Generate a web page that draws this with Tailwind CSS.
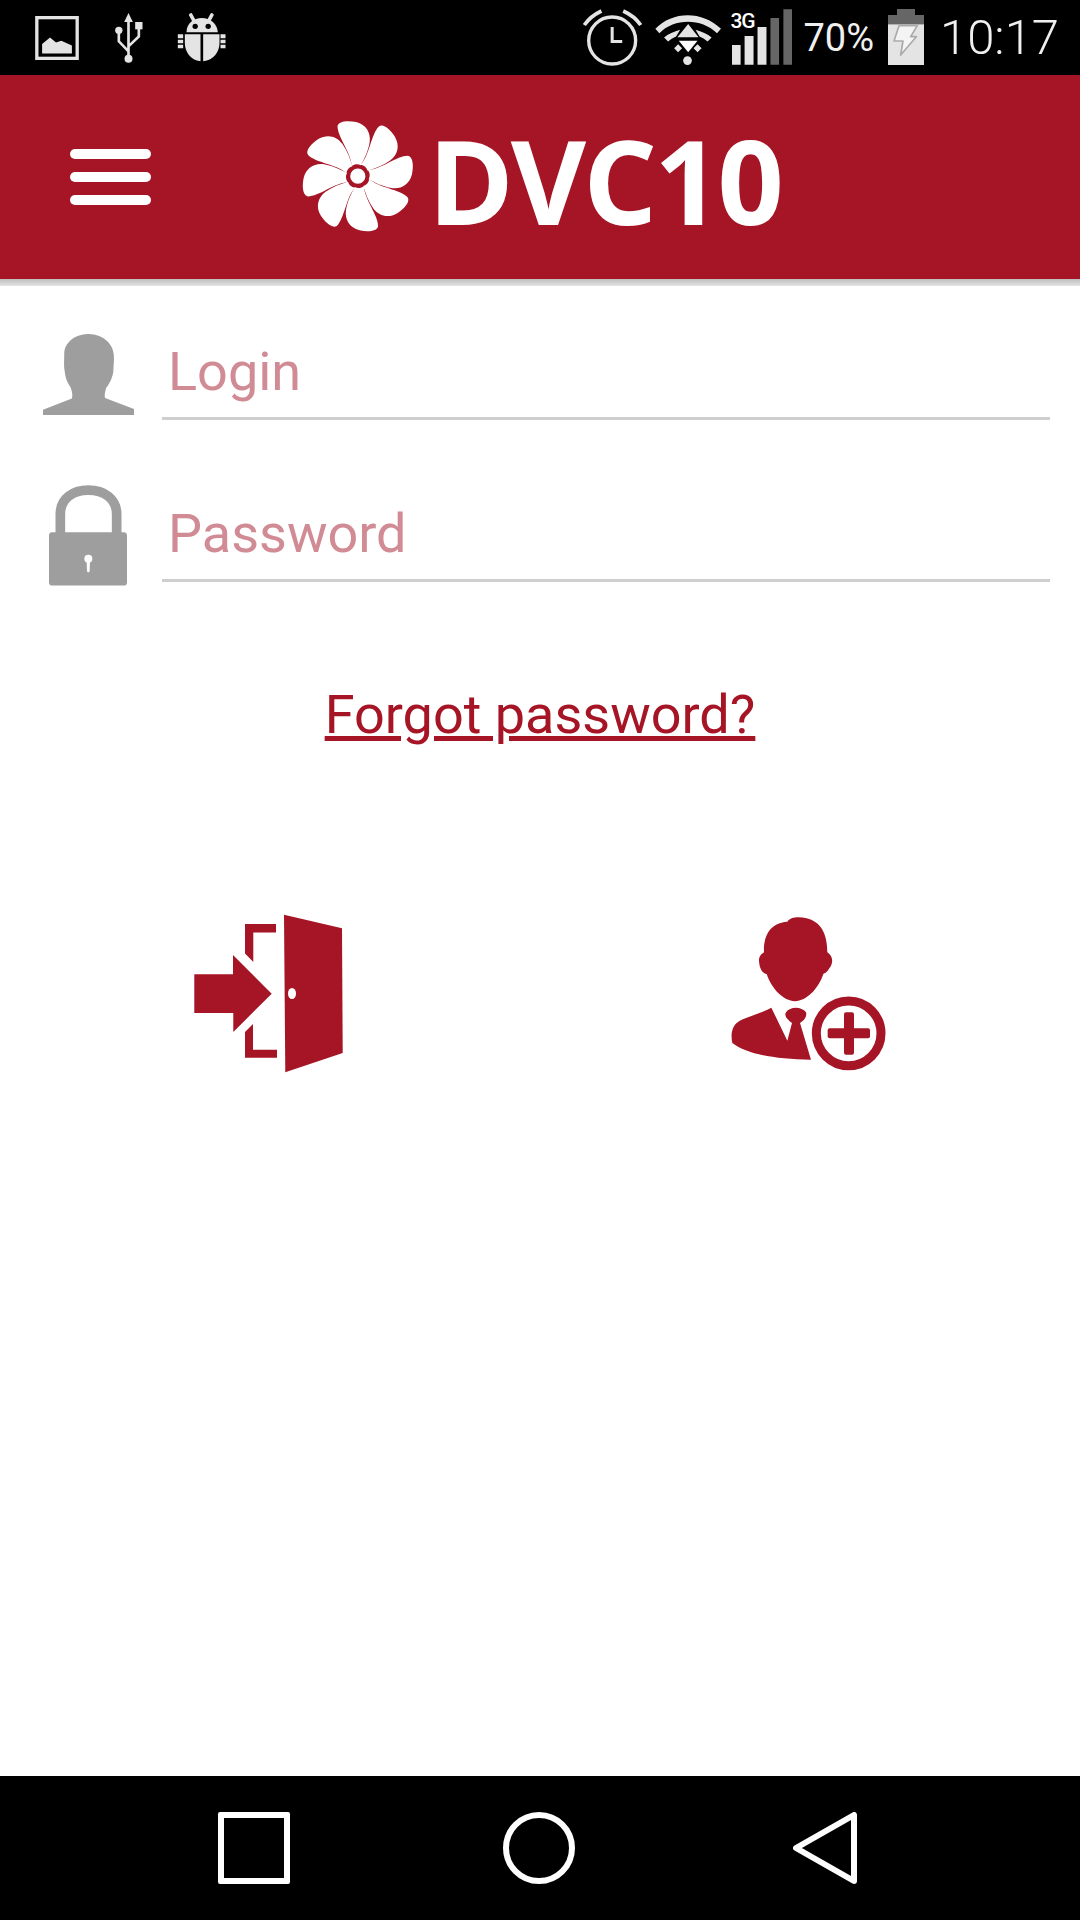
<!DOCTYPE html>
<html lang="en">
<head>
    <meta charset="UTF-8">
    <meta name="viewport" content="width=device-width, initial-scale=1.0">
    <title>DVC10</title>
    <script src="https://cdn.jsdelivr.net/npm/@tailwindcss/browser@4"></script>
</head>
<body class="bg-white font-['Roboto',sans-serif]">
    <div class="w-[1080px] h-[1920px] flex flex-col overflow-hidden">

        <!-- status bar -->
        <div class="h-[75px] shrink-0 bg-black flex items-start text-[#e4e4e4]">
            <svg class="w-[44px] h-[44px] ml-[35px] mt-[16px] shrink-0" viewBox="105 47 132 133">
                <rect x="110" y="52" width="122" height="123" fill="none" stroke="#e4e4e4" stroke-width="10"/>
                <path fill="#e4e4e4" d="M126 160V132L150 112L168 127L184 122L216 136V160Z"/>
            </svg>
            <svg class="w-[28px] h-[50px] ml-[36px] mt-[13px] shrink-0" viewBox="345 40 83 150">
                <path fill="#e4e4e4" d="M385 40L398 67H372Z"/>
                <path fill="none" stroke="#e4e4e4" stroke-width="8" d="M385 65V170M356 92V125L385 155M416 85V110L385 140"/>
                <circle cx="356" cy="92" r="11" fill="#e4e4e4"/>
                <rect x="405" y="67" width="22" height="22" fill="#e4e4e4"/>
                <circle cx="385" cy="177" r="12" fill="#e4e4e4"/>
            </svg>
            <svg class="w-[49px] h-[49px] ml-[34px] mt-[13px] shrink-0" viewBox="530 40 146 147">
                <path fill="none" stroke="#e4e4e4" stroke-width="11" stroke-linecap="round" d="M571 46L584 70M634 46L621 70"/>
                <path fill="#e4e4e4" d="M558 98C558 70 580 55 604 55C628 55 650 70 652 98Z"/>
                <circle cx="584" cy="80" r="8" fill="#000"/>
                <circle cx="623" cy="80" r="8" fill="#000"/>
                <path fill="#e4e4e4" d="M553 104H600V185C570 182 553 155 553 130ZM608 104H657V130C657 155 640 182 608 185Z"/>
                <path fill="#e4e4e4" d="M532 104H548V116H532ZM532 120H548V131H532ZM532 135H548V146H532ZM660 104H675V116H660ZM660 120H675V131H660ZM660 135H675V146H660Z"/>
            </svg>

            <div class="ml-auto flex items-start pr-[21px]">
                <svg class="w-[59px] h-[57px] mt-[9px] shrink-0" viewBox="70 28 176 170">
                    <circle cx="157" cy="122" r="70" fill="none" stroke="#e4e4e4" stroke-width="10"/>
                    <path fill="none" stroke="#e4e4e4" stroke-width="9" d="M157 82V125H187"/>
                    <path fill="none" stroke="#e4e4e4" stroke-width="11" d="M74 76C86 58 104 44 125 34M190 34C212 44 230 58 242 76"/>
                </svg>
                <svg class="w-[67px] h-[52px] ml-[12px] mt-[14px] shrink-0" viewBox="10 28 200 155">
                    <path fill="#e4e4e4" d="M14 72C65 18 155 18 210 72L198 85C150 40 72 40 26 85Z"/>
                    <path fill="#e4e4e4" d="M40 98L52 110C60 103 68 98 76 95L88 75C70 80 52 88 40 98ZM182 98L170 110C162 103 154 98 146 95L134 75C152 80 170 88 182 98Z"/>
                    <path fill="#e4e4e4" d="M112 58L143 97H80Z"/>
                    <path fill="#fff" d="M84 108H140L112 142Z"/>
                    <path fill="#e4e4e4" d="M82 118L94 130L82 142L70 130ZM140 118L152 130L140 142L128 130Z"/>
                    <circle cx="110" cy="167" r="13" fill="#e4e4e4"/>
                </svg>
                <div class="relative w-[60px] h-[56px] ml-[11px] mt-[9px] shrink-0">
                    <svg class="w-[60px] h-[56px]" viewBox="247 12 181 168">
                        <path fill="#e4e4e4" d="M247 120H273V180H247ZM285 93H312V180H285ZM324 66H351V180H324Z"/>
                        <path fill="#666" d="M363 39H389V180H363ZM402 12H428V180H402Z"/>
                    </svg>
                    <span class="absolute left-[-2px] top-[0px] text-[21px] leading-[24px] font-medium tracking-[-1px] text-white">3G</span>
                </div>
                <span class="ml-[11px] mt-[16px] text-[38px] leading-[44px] font-normal text-[#f0f0f0]">70%</span>
                <svg class="w-[36px] h-[56px] ml-[14px] mt-[9px] shrink-0" viewBox="27 12 108 168">
                    <path fill="#666" d="M54 12H108V30H135V58H27V30H54Z"/>
                    <path fill="#e4e4e4" d="M27 58H135V180H27Z"/>
                    <path fill="#f4f4f4" stroke="#aaa" stroke-width="5" stroke-linejoin="round" d="M60 62H115L95 95H112L65 150L72 108H45Z"/>
                </svg>
                <span class="ml-[16px] mt-[11px] text-[49px] leading-[54px] font-light text-[#f0f0f0]">10:17</span>
            </div>
        </div>

        <!-- header -->
        <header class="h-[204px] shrink-0 bg-[#a61525] flex items-center relative">
            <div class="w-[81px] ml-[70px] flex flex-col gap-[13px]">
                <div class="h-[10px] rounded-full bg-white"></div>
                <div class="h-[10px] rounded-full bg-white"></div>
                <div class="h-[10px] rounded-full bg-white"></div>
            </div>
            <svg class="w-[115px] h-[114px] ml-[150px] shrink-0" viewBox="35 35 340 335">
                <defs>
                    <path id="blade" fill="#fff" d="M185 170C183 130 143 85 143 52C146 36 175 35 198 40C228 48 242 72 238 100C234 125 222 150 212 168C203 163 194 164 185 170Z"/>
                </defs>
                <use href="#blade"/>
                <use href="#blade" transform="rotate(45 203 200)"/>
                <use href="#blade" transform="rotate(90 203 200)"/>
                <use href="#blade" transform="rotate(135 203 200)"/>
                <use href="#blade" transform="rotate(180 203 200)"/>
                <use href="#blade" transform="rotate(225 203 200)"/>
                <use href="#blade" transform="rotate(270 203 200)"/>
                <use href="#blade" transform="rotate(315 203 200)"/>
                <circle cx="203" cy="200" r="27" fill="#fff" stroke="#a61525" stroke-width="9"/>
            </svg>
            <span class="ml-[12px] mt-[6px] font-['Open_Sans',sans-serif] font-bold text-[116px] leading-none tracking-[-3px] text-white">DVC10</span>
            <div class="absolute left-0 right-0 top-full h-[7px] bg-gradient-to-b from-[#bdbdbd] to-[#e4e4e4]"></div>
        </header>

        <!-- login form -->
        <main class="flex-1 flex flex-col">
            <div class="flex items-end mt-[51px] pr-[30px]">
                <svg class="w-[91px] h-[81px] ml-[43px] shrink-0 mb-[5px]" viewBox="68 69 274 244">
                    <path fill="#9e9e9e" d="M68 313V297L155 263C158 250 155 240 150 228C140 215 135 200 133 180C130 165 132 150 132 125C135 90 170 68 207 69C245 70 278 95 281 130C283 150 280 165 280 180C278 200 268 220 258 232C255 245 252 255 255 262L342 295V313Z"/>
                </svg>
                <div class="flex-1 ml-[28px] h-[90px] border-b-[3px] border-[#cfcfcf] pl-[6px] text-[54px] leading-[84px] text-[#d18b95]">Login</div>
            </div>
            <div class="flex items-end mt-[72px] pr-[30px]">
                <svg class="w-[78px] h-[101px] ml-[49px] shrink-0 mt-[-7px] mb-[-4px]" viewBox="88 525 234 302">
                    <path fill="none" stroke="#9e9e9e" stroke-width="29" d="M122 672V612C122 565 160 540 206 540C252 540 291 565 291 612V672"/>
                    <rect x="88" y="666" width="234" height="160" rx="10" fill="#9e9e9e"/>
                    <circle cx="206" cy="746" r="12" fill="#fff"/>
                    <path fill="#fff" d="M201 750H211L210 782C209 788 203 788 202 782Z"/>
                </svg>
                <div class="flex-1 ml-[35px] h-[90px] border-b-[3px] border-[#cfcfcf] pl-[6px] text-[54px] leading-[84px] text-[#d18b95]">Password</div>
            </div>

            <a class="mt-[100px] text-center text-[54px] leading-[66px] text-[#a61525] underline">Forgot password?</a>

            <div class="grid grid-cols-2 mt-[141px]">
                <div class="flex justify-center">
                    <svg class="w-[200px] h-[200px]" viewBox="0 0 200 200">
                        <path fill="#a61525" d="M114 25.7L172 39.3L172.7 164L115.3 183.3Z"/>
                        <ellipse cx="122" cy="104.5" rx="4" ry="5.5" fill="#fff"/>
                        <path fill="#a61525" d="M24.3 85.3H63V66L101.7 104.7L63.3 143V124H24.3Z"/>
                        <path fill="#a61525" d="M75 35H106V43.5H83.3V73L75 64.5ZM75 168.7H107V160.7H83V135L75 143Z"/>
                    </svg>
                </div>
                <div class="flex justify-center">
                    <svg class="w-[190px] h-[190px] mt-[10px] mr-[10px]" viewBox="0 0 570 570">
                        <path fill="#a61525" d="M232 68C240 55 265 52 290 58C330 68 352 100 352 160C368 170 372 190 358 208C350 222 345 222 340 225C325 270 290 305 255 307C220 305 185 270 170 225C155 222 148 205 147 185C147 170 155 165 162 160C160 110 180 72 232 68Z"/>
                        <path fill="#a61525" d="M184 326L232 425L246 372C230 360 222 350 228 340C240 322 275 322 288 340C292 352 282 365 270 372L303 482C190 480 110 465 67 432C62 410 65 385 80 372C100 355 150 345 184 326Z"/>
                        <circle cx="416" cy="403" r="97" fill="#fff" stroke="#a61525" stroke-width="27"/>
                        <rect x="353" y="388" width="127" height="30" rx="6" fill="#a61525"/>
                        <rect x="402" y="340" width="30" height="127" rx="6" fill="#a61525"/>
                    </svg>
                </div>
            </div>
        </main>

        <!-- nav bar -->
        <nav class="h-[144px] shrink-0 bg-black flex items-start">
            <div class="w-[72px] h-[72px] ml-[218px] mt-[36px] border-[6px] border-white rounded-[2px]"></div>
            <div class="w-[72px] h-[72px] ml-[213px] mt-[36px] border-[6px] border-white rounded-full"></div>
            <svg class="w-[64px] h-[72px] ml-[218px] mt-[36px]" viewBox="0 0 64 72">
                <path fill="none" stroke="#fff" stroke-width="6" stroke-linejoin="round" d="M61 3V69L3 36Z"/>
            </svg>
        </nav>
    </div>
</body>
</html>
